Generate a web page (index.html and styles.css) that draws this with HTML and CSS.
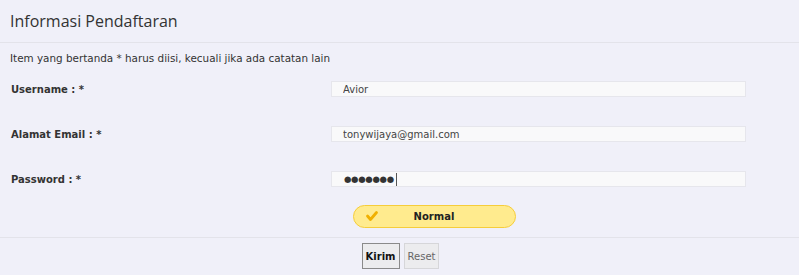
FILE: index.html
```html
<!DOCTYPE html>
<html>
<head>
    <title>Informasi Pendaftaran</title>
    <link rel="stylesheet" href="styles.css">
</head>
<body>
    <div class="panel">
        <div class="panel-head">
            <h2>Informasi Pendaftaran</h2>
        </div>

        <p class="note">Item yang bertanda * harus diisi, kecuali jika ada catatan lain</p>

        <form class="reg-form">
            <div class="row">
                <label for="username">Username : *</label>
                <input type="text" id="username" value="Avior">
            </div>
            <div class="row">
                <label for="email">Alamat Email : *</label>
                <input type="text" id="email" value="tonywijaya@gmail.com">
            </div>
            <div class="row">
                <label for="password">Password : *</label>
                <div class="fake-input"><span class="dots">&#9679;&#9679;&#9679;&#9679;&#9679;&#9679;&#9679;</span><span class="caret"></span></div>
            </div>
            <div class="row">
                <span></span>
                <div class="strength">
                    <svg class="check" width="14" height="12" viewBox="0 0 14 12">
                        <path d="M2.5 6 L5.5 9.5 L11.5 2.5" fill="none" stroke="#f0b000" stroke-width="2.8" stroke-linecap="round" stroke-linejoin="round"/>
                    </svg>
                    <span class="strength-text">Normal</span>
                </div>
            </div>

            <div class="actions">
                <button type="button" class="btn btn-primary">Kirim</button>
                <button type="reset" class="btn">Reset</button>
            </div>
        </form>
    </div>
</body>
</html>
```

FILE: styles.css
```css
body {
    margin: 0;
    background-color: #f0f0f9;
    font-family: "DejaVu Sans", Verdana, sans-serif;
    font-size: 11px;
    color: #333;
}
.panel-head {
    height: 42px;
    border-bottom: 1px solid #e3e3ea;
    padding: 0 10px;
    display: flex;
    align-items: center;
}
.panel-head h2 {
    margin: 0;
    font-family: "Open Sans", sans-serif;
    font-weight: normal;
    font-size: 16px;
    color: #333;
    padding-bottom: 1px;
}
.note {
    margin: 0;
    padding: 8px 10px 0;
    line-height: 14px;
    font-size: 10.4px;
    color: #333;
}
.reg-form {
    margin-top: 16px;
}
.row {
    display: grid;
    grid-template-columns: 320px 415px;
    padding-left: 11px;
    align-items: center;
    margin-bottom: 29px;
}
.row label {
    font-weight: bold;
    font-size: 10px;
    color: #333;
    padding-top: 1px;
}
.row input,
.fake-input {
    box-sizing: border-box;
    height: 16px;
    width: 415px;
    border: 1px solid #e6e6ec;
    background-color: #f9f9fa;
    padding: 0 0 0 11px;
    font-family: "DejaVu Sans", Verdana, sans-serif;
    font-size: 10px;
    color: #444;
    outline: none;
}
.fake-input {
    display: flex;
    align-items: center;
}
.dots {
    font-size: 8.5px;
    letter-spacing: -0.3px;
    color: #333;
    padding-left: 1px;
}
.caret {
    width: 1px;
    height: 13px;
    background-color: #555;
    margin-left: 2px;
}
.strength {
    box-sizing: border-box;
    margin-left: 22px;
    margin-top: -11px;
    width: 163px;
    height: 23px;
    border: 1px solid #f6cd3b;
    border-radius: 12px;
    background-color: #ffeb8e;
    display: flex;
    align-items: center;
    position: relative;
}
.check {
    position: absolute;
    left: 11px;
    top: 4px;
}
.strength-text {
    flex: 1;
    text-align: center;
    font-weight: bold;
    font-size: 10px;
    color: #222;
    padding-right: 1px;
}
.actions {
    margin-top: -20px;
    border-top: 1px solid #e3e3ea;
    padding-top: 5px;
    display: flex;
    justify-content: center;
    gap: 4px;
    padding-left: 2px;
}
.btn {
    font-family: "DejaVu Sans", Verdana, sans-serif;
    font-size: 10px;
    height: 26px;
    padding: 0 3px;
    background-color: #ececee;
    border: 1px solid #d6d6d9;
    color: #666;
    cursor: pointer;
}
.btn-primary {
    font-weight: bold;
    color: #111;
    border: 1px solid #8a8a8a;
}
```
